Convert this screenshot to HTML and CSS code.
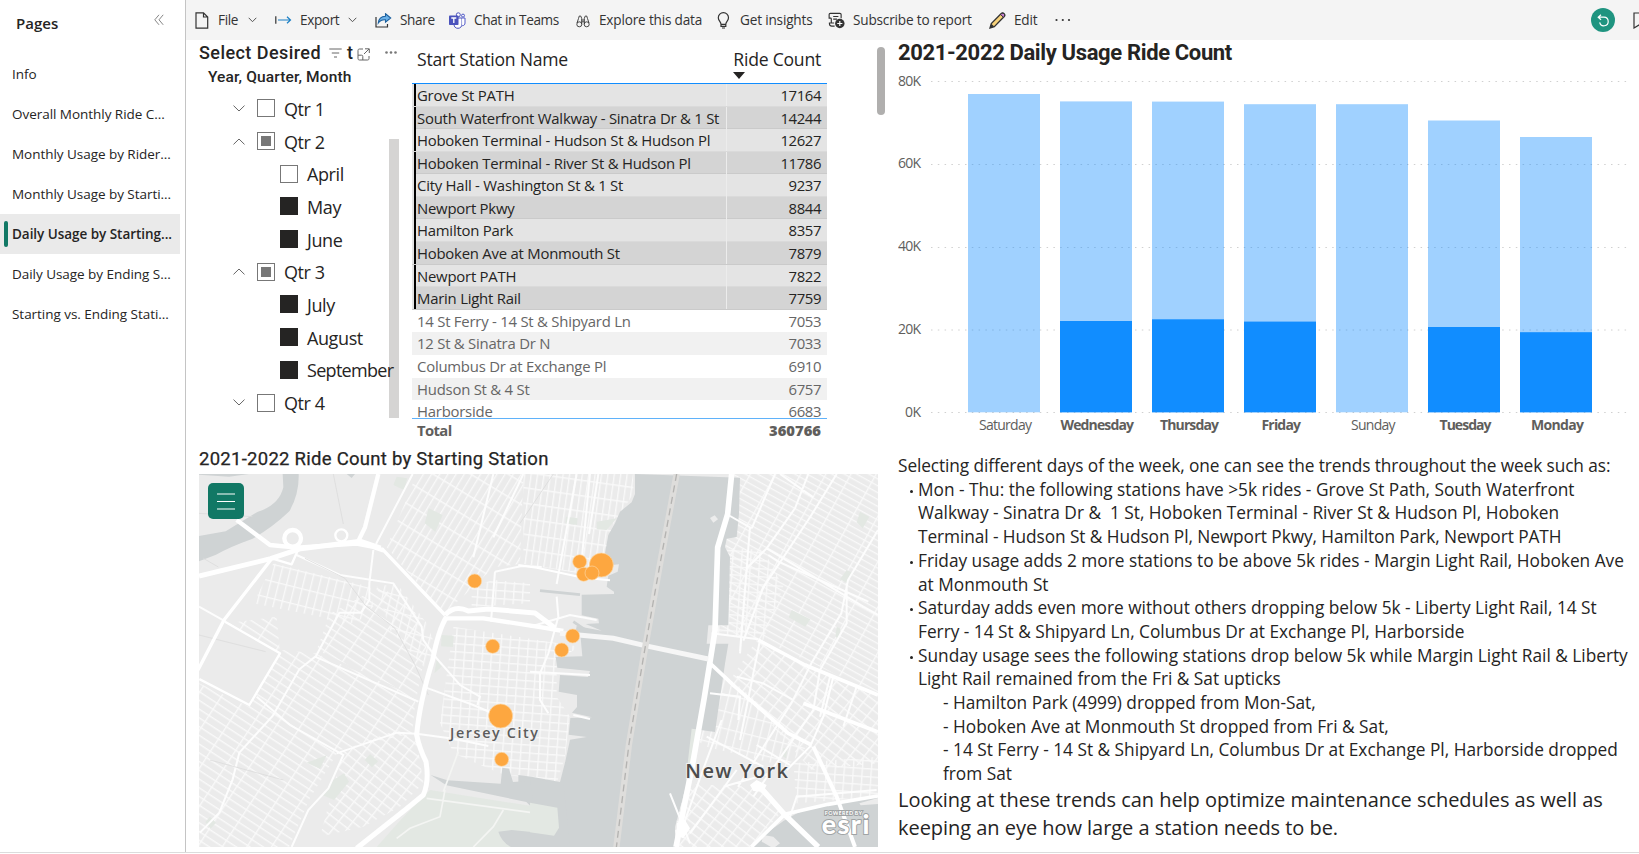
FILE: index.html
```html
<!DOCTYPE html>
<html lang="en">
<head>
<meta charset="utf-8">
<title>Daily Usage by Starting Station</title>
<link rel="stylesheet" href="styles.css">
</head>
<body>
<div class="app">
  <nav class="pages">
    <header class="pages-head">
      <h2>Pages</h2>
      <svg class="collapse" width="10" height="12" viewBox="0 0 10 12"><path d="M5 .8.8 5.800 5 10.800M9.200.8 5 5.800l4.200 5"/></svg>
    </header>
    <ul>
      <li><span>Info</span></li>
      <li><span>Overall Monthly Ride C...</span></li>
      <li><span>Monthly Usage by Rider...</span></li>
      <li><span>Monthly Usage by Starti...</span></li>
      <li class="active"><span>Daily Usage by Starting...</span></li>
      <li><span>Daily Usage by Ending S...</span></li>
      <li><span>Starting vs. Ending Stati...</span></li>
    </ul>
  </nav>
  <div class="main">
    <div class="toolbar">
      <div class="tools">
        <div class="tool file"><svg width="14" height="17" viewBox="0 0 14 17"><path class="ink" d="M1 .8h7.500L12.700 5v11.200H1zM8.500.8V5h4.200"/></svg><span>File</span><svg class="chev" width="9" height="6" viewBox="0 0 9 6"><path d="M.7.8l3.800 3.900L8.300.8"/></svg></div>
        <div class="tool export"><svg width="17" height="10" viewBox="0 0 17 10"><path class="ink" d="M.8 1.300v7.400"/><path class="blue" d="M3 5h12.500M12 1.700 15.500 5 12 8.300"/></svg><span>Export</span><svg class="chev" width="9" height="6" viewBox="0 0 9 6"><path d="M.7.8l3.800 3.900L8.300.8"/></svg></div>
        <div class="tool share"><svg width="17" height="15" viewBox="0 0 17 15"><path class="ink" d="M1 4v10h11.500v-3"/><path d="M10.500.8 15.700 5l-5.200 4.200V6.800C7.300 6.600 5 7.600 3.300 10 3.600 6 6 3.400 10.500 3.200z" fill="#6bb1e8" stroke="#1b5f9e" stroke-width="1.100"/></svg><span>Share</span></div>
        <div class="tool teams"><svg width="17" height="17" viewBox="0 0 17 17"><circle cx="14" cy="3.600" r="1.500" stroke="#5059c9"/><circle cx="9.300" cy="2.800" r="2" fill="#fff" stroke="#4b53bc"/><path d="M9 6h4v6c0 2.500-1.600 4.300-4 4.300S5 15 5 12z" fill="#fff" stroke="#4b53bc"/><path d="M13 6h3v5c0 1.600-1 2.700-2.800 2.700" fill="#fff" stroke="#5059c9"/><rect y="3.500" width="9.500" height="9.500" rx=".8" fill="#4b53bc"/><path d="M2.300 6h5M4.800 6v5" stroke="#fff" stroke-width="1.300"/></svg><span>Chat in Teams</span></div>
        <div class="tool"><svg class="bino" width="14" height="13" viewBox="0 0 14 13"><path class="thin" d="M2.500 3.500 3.300 1h1.400l1 2.300v6M11.500 3.500 10.700 1H9.300l-1 2.300v6M2.500 3.500 1 8M11.500 3.500 13 8M5.700 5h2.600M5.700 6.800h2.600"/><circle class="thin" cx="3.300" cy="9.300" r="2.500"/><circle class="thin" cx="10.700" cy="9.300" r="2.500"/></svg><span>Explore this data</span></div>
        <div class="tool"><svg class="bulb" width="13" height="17" viewBox="0 0 13 17"><path class="ink" d="M4 12.300C4 9.800 1.300 8.900 1.300 5.700a5.100 5.100 0 0 1 10.200 0c0 3.200-2.700 4.100-2.700 6.600zM4 12.300v2h4.800v-2M5 16h3"/></svg><span>Get insights</span></div>
        <div class="tool"><svg width="17" height="17" viewBox="0 0 18 17"><path class="ink" d="M7 14.500H4c-1.500 0-2.500-1-2.500-2.500v-.8h5M3.500 11V6M3.500 6H1.200V2.200c0-.7.4-1.200 1.200-1.200h10.200c.8 0 1.300.5 1.300 1.200V6M5.500 4.300h5.500M5.500 7h4"/><circle cx="12.500" cy="11.700" r="5" fill="#333"/><path d="M12.500 9v5.400M9.800 11.700h5.400" stroke="#fff" stroke-width="1.200"/></svg><span>Subscribe to report</span></div>
        <div class="tool"><svg width="17" height="17" viewBox="0 0 17 17"><path d="M1 16 2.300 11.500 12 1.800c1-1 2.200-1 3.100-.1s.9 2.100-.1 3.100L5.300 14.600z" fill="#f7d27a" stroke="#333" stroke-width="1.300"/><path d="m11.500 2.400 3 3 1-1.400c.8-1.400-1-3.400-2.600-2.700z" fill="#c77fd0" stroke="#333"/><path d="m1 16 1.300-4.300 2.900 2.900z" fill="#333"/></svg><span>Edit</span></div>
        <div class="tool"><svg class="dots" width="16" height="4" viewBox="0 0 16 4"><circle cx="1.500" cy="2" r="1.100"/><circle cx="7.800" cy="2" r="1.100"/><circle cx="14" cy="2" r="1.100"/></svg></div>
      </div>
      <div class="tools-right">
        <span class="reset"><svg width="13" height="13" viewBox="0 0 13 13"><path d="M4 .8 1.200 3.200 4 5.800M1.200 3.200H7a4.300 4.300 0 1 1-4.300 5.200"/></svg></span>
        <svg class="bookmark" width="12" height="17" viewBox="0 0 12 17"><path class="ink" d="M1 1h10v15l-5-3-5 3z"/></svg>
      </div>
    </div>
    <div class="report">
      <div class="left">
        <div class="top">
          <section class="slicer">
            <div class="slicer-title"><h3>Select Desired</h3>
              <svg class="filter" width="13" height="10" viewBox="0 0 13 10"><path d="M.3 1h12.400M2.800 5h7.400M5 9h3"/></svg><b>t</b>
              <svg class="focus" width="13" height="13" viewBox="0 0 13 13"><path d="M6 1H2.500C1.500 1 1 1.500 1 2.500v8c0 1 .5 1.500 1.500 1.500h8c1 0 1.500-.5 1.500-1.500V8M1 7.200h3.500c1 0 1.300.4 1.300 1.300V12M8 .8h4.300V5M12 1 7 6"/></svg>
              <svg class="more" width="12" height="3" viewBox="0 0 12 3"><circle cx="1.500" cy="1.500" r="1.300"/><circle cx="6" cy="1.500" r="1.300"/><circle cx="10.500" cy="1.500" r="1.300"/></svg>
            </div>
            <h4>Year, Quarter, Month</h4>
            <div class="tree">
              <ul>
                <li><svg class="tw" width="12" height="7" viewBox="0 0 12 7"><path d="M.5.6 6 6 11.500.6"/></svg><i class="box"></i><span>Qtr 1</span></li>
                <li><svg class="tw" width="12" height="7" viewBox="0 0 12 7"><path d="M.5 6.400 6 1l5.500 5.400"/></svg><i class="box part"></i><span>Qtr 2</span></li>
                <li class="sub"><i class="box"></i><span>April</span></li>
                <li class="sub"><i class="box full"></i><span>May</span></li>
                <li class="sub"><i class="box full"></i><span>June</span></li>
                <li><svg class="tw" width="12" height="7" viewBox="0 0 12 7"><path d="M.5 6.400 6 1l5.500 5.400"/></svg><i class="box part"></i><span>Qtr 3</span></li>
                <li class="sub"><i class="box full"></i><span>July</span></li>
                <li class="sub"><i class="box full"></i><span>August</span></li>
                <li class="sub"><i class="box full"></i><span>September</span></li>
                <li><svg class="tw" width="12" height="7" viewBox="0 0 12 7"><path d="M.5.6 6 6 11.500.6"/></svg><i class="box"></i><span>Qtr 4</span></li>
              </ul>
              <div class="tree-bar"></div>
            </div>
          </section>
          <section class="stations">
            <div class="th"><span>Start Station Name</span><span class="sorted">Ride Count</span></div>
            <div class="rows">
              <div class="row on"><span>Grove St PATH</span><span>17164</span></div>
              <div class="row on alt"><span>South Waterfront Walkway - Sinatra Dr &amp; 1 St</span><span>14244</span></div>
              <div class="row on"><span>Hoboken Terminal - Hudson St &amp; Hudson Pl</span><span>12627</span></div>
              <div class="row on alt"><span>Hoboken Terminal - River St &amp; Hudson Pl</span><span>11786</span></div>
              <div class="row on"><span>City Hall - Washington St &amp; 1 St</span><span>9237</span></div>
              <div class="row on alt"><span>Newport Pkwy</span><span>8844</span></div>
              <div class="row on"><span>Hamilton Park</span><span>8357</span></div>
              <div class="row on alt"><span>Hoboken Ave at Monmouth St</span><span>7879</span></div>
              <div class="row on"><span>Newport PATH</span><span>7822</span></div>
              <div class="row on alt"><span>Marin Light Rail</span><span>7759</span></div>
              <div class="row"><span>14 St Ferry - 14 St &amp; Shipyard Ln</span><span>7053</span></div>
              <div class="row alt"><span>12 St &amp; Sinatra Dr N</span><span>7033</span></div>
              <div class="row"><span>Columbus Dr at Exchange Pl</span><span>6910</span></div>
              <div class="row alt"><span>Hudson St &amp; 4 St</span><span>6757</span></div>
              <div class="row"><span>Harborside</span><span>6683</span></div>
            </div>
            <div class="total"><span>Total</span><b>360766</b></div>
          </section>
          <div class="table-bar"></div>
        </div>
        <section class="mapcard">
          <h3>2021-2022 Ride Count by Starting Station</h3>
          <div class="map">
            <svg width="679" height="373" viewBox="27 102 2037 1119" preserveAspectRatio="none">
              <defs>
                <pattern id="g1" width="19" height="46" patternUnits="userSpaceOnUse" patternTransform="rotate(8)"><path d="M0 0H19M0 0V46" class="st"/></pattern>
                <pattern id="g2" width="21" height="58" patternUnits="userSpaceOnUse" patternTransform="rotate(31)"><path d="M0 0H21M0 0V58" class="st"/></pattern>
                <pattern id="g3" width="27" height="24" patternUnits="userSpaceOnUse" patternTransform="rotate(4)"><path d="M0 0H27M0 0V24" class="st"/></pattern>
                <pattern id="g4" width="62" height="22" patternUnits="userSpaceOnUse" patternTransform="rotate(33)"><path d="M0 0H62M0 0V22" class="st"/></pattern>
                <pattern id="g5" width="66" height="18" patternUnits="userSpaceOnUse" patternTransform="rotate(29)"><path d="M0 0H66M0 0V18" class="st"/></pattern>
                <pattern id="g6" width="34" height="25" patternUnits="userSpaceOnUse" patternTransform="rotate(38)"><path d="M0 0H34M0 0V25" class="st"/></pattern>
                <pattern id="g7" width="24" height="50" patternUnits="userSpaceOnUse" patternTransform="rotate(14)"><path d="M0 0H24M0 0V50" class="st"/></pattern>
              </defs>
              <rect x="27" y="102" width="2037" height="1119" fill="#ebebeb"/>
              <!-- street grids by neighbourhood -->
              <path fill="url(#g1)" d="M1000 102h330v60l-60 90-25 90-5 70-240-40z"/>
              <path fill="url(#g2)" d="M680 102h320l-10 270-80 10-60 60-90 80-170-200z"/>
              <path fill="url(#g3)" d="M790 560l380 60-70 40v110l40 60-15 120-25 80-170-30-140-60-40-90z"/>
              <path fill="url(#g3)" d="M845 440l65-20 110 10v60l-175 10z"/>
              <path fill="url(#g4)" d="M27 730l150 70 100-170 100 10 300 130-10 110-220 50-90 150-60 141H27z"/>
              <path fill="url(#g7)" d="M250 370l290 70 10 60-50 50-60 0-50-20-200-40z"/>
              <path fill="url(#g4)" d="M110 550l150-20 10 110zM420 520l150-80 100 60 40 120-30 150-300-140z"/>
              <path fill="url(#g7)" d="M560 440l60-10 90 120 30 80-30 60-110-120z"/>
              <path fill="url(#g6)" d="M460 930l160-60 60 30 20 130-70 70-110 60-130 30z"/>
              <path fill="url(#g5)" d="M1625 102h439v660l-320-150-160-40 10-300z"/>
              <path fill="url(#g3)" d="M1580 320l140 10 60 110-60 160-145-20z"/>
              <path fill="url(#g6)" d="M1700 600l364 170v200l-200 20-150-170-100-90z"/>
              <path fill="url(#g7)" d="M1560 680l90 60 200 180-60 60-240-60-30-20z"/>
              <path fill="url(#g6)" d="M1430 1030l270 10 80 70-100 111h-260z"/>
              <path fill="url(#g3)" d="M1810 970l254-20v120l-244 20z"/>
              <!-- parks -->
              <g fill="#e3e8e3">
                <path d="M620 110l32 5-10 35-32-15zM716 205l42 20-22 50-32-25zM755 585l36 2-2 34-36-2zM430 1020l32-20 15 25-45 55-35-15zM350 968l60-22-20 40zM540 942l24 22-18 18-22-22zM740 660l15 20-22 20zM1128 230l35 5-2 20-35-5zM1220 245l60-10-30 35-30-2zM1805 510l56 28-15 22-50-28zM2010 215l28 15-20 35-18-18zM1970 390l20 10-20 28-20-10zM1455 860l70 10-20 130-30 60-40-60zM60 1130l18 18-16 18-16-20zM1940 560l12 6-6 30-10-6zM1780 925l12 0-4 30-10-6z"/>
                <path d="M720 1050l380 60 20 85-30 26H560l75-85z"/>
              </g>
              <!-- water -->
              <g fill="#cfd3d4">
                <path d="M278 102h48q2 60-28 112-50 48-110 82-70 25-110 48L27 364v-76l80-14 95-58q65-20 78-74zM27 102h150l-60 8-90-6zM470 102h25l-10 12z"/>
                <path d="M1335 102l0 60-10 25-35 28-15 35-20 35-10 55 20 35 22-2-4 22-28 12-5 33 22 15v7l-97 2v62l50 10 2 14-40 2 48 20-75-14-3 16 15 20 5 55-80 2 5 32 98 10-6 18-84-6-4 50 55 10v36l-15 17 60 14-65 2-5 50 54 7-50 8-14 65-16 62-85-16-40-5v50l60 55 20 60 0 61h390v-70l35-130v-35l15-130 70 10 30-205 10-60-65 0 5-55h60l5-205-15-30 5-25 30-5 7-70 3-108z"/>
                <path d="M722 1005l50 16 160 10 5-48 20 3 12 40 40-3v-10l60 10v75l-40-6-8 6-12-12-240-50z"/>
                <path d="M925 1175l40-5 120 12v40H965q-30-15-40-47zM1690 1221q70-80 170-118l204-35v153z"/>
                <path d="M1020 1015l100 18 20 180-50 8H1040v-36l60-6-10-66-60-15z"/>
              </g>
              <path d="M1020 1088l82 15 5 60-15 24-72-10z" fill="#e3e8e3"/>
              <path d="M1560 234l14-8 10 12-14 10z" fill="#ececec"/>
              <path d="M1050 452l120 12M1150 545l35 24" stroke="#cfd3d4" stroke-width="8"/>
              <path d="M1720 1185l30 5 20 20-20 15-35-20zM2008 1090l56-16v18l-52 4z" fill="#ececec"/>
              <!-- secondary streets -->
              <g class="sec">
                <path d="M320 345l130 60 160 25 85 130 5 40 40 55 70 80 60 35-8 25M550 330l-12 100v50l-25 38h-65l-70 130-50 40-80 140-100 110-20 80-40 100-58 60M375 650l310 135M200 770l100 85 160 90-45 100-60 65-50 111M440 940l180-62 60 3 110 15 105 22M700 740l150 55 70 30M915 395l80-17 60 3M915 395l-12 150M668 102l-110 210M910 102l-60 250M1000 102l-90 190M27 500l80 45"/>
                <path d="M1100 470l5 60-30 110-25 60v80l25 40M1020 695l180 10M1150 825l50 12M1020 560l120-35 80 15M1200 102l-30 310M1225 102l-28 180M1160 102l-60 330"/>
                <path d="M1615 225l70 40M1685 265l70-163M1680 260l-30 380M1730 325l-60 60-20 250M1730 325l85-120 40-103M1730 325l290 175 44 25M1735 345l30 20 270 120M1940 102l-80 130-140 210-60 160M2064 270l-90 150-20 100-90 150-60 120-160 250M1565 580l140 18M1920 710l-30 120M2000 740l-40 120M1640 710l80 20 90 50M1560 760l90 10-5 70M1550 890l170 90M1970 430l0 120-80 140-20 120-180 260M1700 915l100 60M1710 600l-60 300M1475 1170l60-170 60-160M1500 1180l140-190M1600 1040l140-40M1800 1130l20-60 240-20M1440 1060l60 150M1770 102l100 70"/>
              </g>
              <g class="pk"><path d="M710 1075l310 42M765 1050l-15 80-90 35-40 30M940 1110l-30 50-60 61M805 935l-45 120"/></g>
              <g class="rail"><path d="M27 585l200 50M345 355l120 60 60 80 90 70 60 110 40 90M430 102l30 150M60 960l220 60M990 250l100-148M27 220l160 10M40 355l45 26"/></g>
              <!-- arterials -->
              <g stroke="#fff" stroke-linejoin="round">
                <path d="M27 408l215-52 90-30 180-22 60 20" stroke-width="15"/>
                <path d="M140 240l100 75 80 8 180-12 50 10 30 10" stroke-width="13"/>
                <path d="M565 102l-40 160-22 45" stroke-width="13"/>
                <path d="M242 360l-140 180-78 150M575 325l190 200" stroke-width="10"/>
                <path d="M105 545l165 95-92 155-150-78" stroke-width="7"/>
                <circle cx="308" cy="295" r="25" stroke-width="13"/><circle cx="454" cy="286" r="18" stroke-width="7"/>
                <path d="M245 355l60 18 20-45" stroke-width="7"/>
                <path d="M770 530q-25 40-42 130-40 130-48 225 8 40 28 80 10 60-8 100l-55 45-145 115" stroke-width="15"/>
                <path d="M765 525q30-32 70-12l60-6 140 12 60 45" stroke-width="15"/>
                <path d="M770 535l110 0 180 28 60 10" stroke-width="13"/>
                <path d="M985 375l55 8 140 30 80 8" stroke-width="6"/>
                <path d="M1625 102l-12 120-30 100-8 250-32 200-35 200-50 249" stroke-width="17"/>
                <path d="M1705 600l140 75 219 90M1840 790l224 86M1555 665l80 75 160 140 70 35M2064 1068l-150 25-130 30-100 98" stroke-width="11"/>
                <path d="M1705 1035l80 90 100 96" stroke-width="16"/>
                <path d="M1870 920l70 150 55 151" stroke-width="12"/>
                <path d="M1860 920l-70 70M1930 710l-30 120-40 90" stroke-width="6"/>
              </g>
              <path d="M1680 1035l20-15 30 15-10 20-30-2zM1460 1150l25-10 15 25-20 30-20-8z" fill="#fff"/>
              <path d="M1110 580l160 15 95 22 190 40" stroke="#f6f6f6" stroke-width="15"/>
              <!-- state line -->
              <path d="M1460 102l-50 270-48 270-45 270-38 311" stroke="#dedddb" stroke-width="19"/>
              <path d="M1460 102l-50 270-48 270-45 270-38 311" stroke="#b4b3b1" stroke-width="4" stroke-dasharray="21 14"/>
              <g class="pins">
                <circle cx="854" cy="423" r="21"/><circle cx="908" cy="619" r="21"/><circle cx="932" cy="828" r="36"/><circle cx="935" cy="958" r="21"/>
                <circle cx="1169" cy="365" r="21"/><circle cx="1181" cy="403" r="21"/><circle cx="1234" cy="375" r="36"/><circle cx="1206" cy="399" r="21"/>
                <circle cx="1148" cy="588" r="21"/><circle cx="1115" cy="630" r="21"/>
              </g>
              <g class="places">
                <text x="780" y="894" font-size="43" textLength="264">Jersey City</text>
                <text x="1486" y="1014" font-size="60" textLength="308" class="ny">New York</text>
              </g>
              <g class="esri">
                <text x="1904" y="1125" font-size="16.500" textLength="112">POWERED BY</text>
                <text x="1895" y="1181" font-size="80" textLength="143" class="logo">esri</text>
              </g>
            </svg>
            <button class="menu" aria-label="Map menu"><svg width="18" height="18" viewBox="0 0 18 18"><path d="M0 2h18M0 9.500h18M0 17h18"/></svg></button>
          </div>
        </section>
      </div>
      <div class="right">
        <h2 class="chart-title">2021-2022 Daily Usage Ride Count</h2>
        <svg class="chart" width="741" height="370" viewBox="898 66 741 370">
          <g class="grid"><path d="M931 81.500h700M931 164.500h700M931 247.500h700M931 330h700M931 412.500h700"/></g>
          <g class="axis">
            <text x="898" y="86" textLength="23">80K</text><text x="898" y="168" textLength="23">60K</text><text x="898" y="251" textLength="23">40K</text><text x="898" y="334" textLength="23">20K</text><text x="905" y="417" textLength="16">0K</text>
          </g>
          <g class="all">
            <rect x="968" y="94" width="72" height="318.300"/><rect x="1060" y="101.400" width="72" height="310.900"/><rect x="1152" y="101.600" width="72" height="310.700"/><rect x="1244" y="104.200" width="72" height="308.100"/><rect x="1336" y="104.200" width="72" height="308.100"/><rect x="1428" y="120.500" width="72" height="291.800"/><rect x="1520" y="137" width="72" height="275.300"/>
          </g>
          <g class="sel">
            <rect x="1060" y="321" width="72" height="91.300"/><rect x="1152" y="319.300" width="72" height="93"/><rect x="1244" y="321.600" width="72" height="90.700"/><rect x="1428" y="327" width="72" height="85.300"/><rect x="1520" y="332.200" width="72" height="80.100"/>
          </g>
          <g class="days">
            <text x="979" y="430" textLength="53">Saturday</text><text x="1060.500" y="430" textLength="73.500" class="b">Wednesday</text><text x="1160" y="430" textLength="59" class="b">Thursday</text><text x="1261.500" y="430" textLength="39.500" class="b">Friday</text><text x="1351" y="430" textLength="44.500">Sunday</text><text x="1439.500" y="430" textLength="52" class="b">Tuesday</text><text x="1531" y="430" textLength="53" class="b">Monday</text>
          </g>
        </svg>
        <article class="notes">
          <p>Selecting different days of the week, one can see the trends throughout the week such as:</p>
          <ul>
            <li>Mon - Thu: the following stations have &gt;5k rides - Grove St Path, South Waterfront<br>Walkway - Sinatra Dr &amp;&nbsp; 1 St, Hoboken Terminal - River St &amp; Hudson Pl, Hoboken<br><span class="tight">Terminal - Hudson St &amp; Hudson Pl, Newport Pkwy, Hamilton Park, Newport PATH</span></li>
            <li>Friday usage adds 2 more stations to be above 5k rides - Margin Light Rail, Hoboken Ave<br>at Monmouth St</li>
            <li>Saturday adds even more without others dropping below 5k - Liberty Light Rail, 14 St<br>Ferry - 14 St &amp; Shipyard Ln, Columbus Dr at Exchange Pl, Harborside</li>
            <li>Sunday usage sees the following stations drop below 5k while Margin Light Rail &amp; Liberty<br>Light Rail remained from the Fri &amp; Sat upticks
              <div class="inner">- Hamilton Park (4999) dropped from Mon-Sat,<br>- Hoboken Ave at Monmouth St dropped from Fri &amp; Sat,<br>- 14 St Ferry - 14 St &amp; Shipyard Ln, Columbus Dr at Exchange Pl, Harborside dropped<br>from Sat</div></li>
          </ul>
          <p class="big">Looking at these trends can help optimize maintenance schedules as well as<br>keeping an eye how large a station needs to be.</p>
        </article>
      </div>
    </div>
  </div>
</div>
</body>
</html>
```
FILE: styles.css
```css
* { box-sizing: border-box; margin: 0; padding: 0; }
body { font-family: "Open Sans", "Noto Sans", sans-serif; color: #252423; background: #fff; overflow: hidden; }
ul { list-style: none; }
svg { display: block; flex: none; fill: none; }
.app { display: flex; height: 853px; border-bottom: 1px solid #dcdcdc; white-space: nowrap; }

/* page list */
.pages { flex: none; width: 186px; border-right: 1px solid #c4c4c4; }
.pages-head { display: flex; justify-content: space-between; height: 54px; padding: 14px 21px 0 16px; }
.pages-head h2 { font-size: 15px; font-weight: 600; line-height: 18px; }
.collapse { stroke: #777; stroke-width: .9; margin-left: 1px; }
.pages li { display: flex; align-items: center; width: 180px; height: 40px; padding-left: 12px; font-size: 13.500px; letter-spacing: -.04px; }
.pages li.active { background: #eaeaea; font-weight: 600; padding-left: 4px; }
.pages li.active::before { content: ""; width: 4px; height: 26px; margin-right: 4px; border-radius: 2px; background: #117865; }

/* toolbar */
.main { flex: 1; min-width: 0; }
.toolbar { display: flex; justify-content: space-between; height: 40px; background: #f4f4f4; overflow: hidden; }
.tools { display: grid; grid-template-columns: 80px 100px 74px 126px 141px 112px 161px 66px 20px; padding-left: 9px; }
.tool { display: flex; align-items: center; gap: 8px; font-size: 13.600px; letter-spacing: -.18px; color: #333; }
.tool span { margin-top: -1px; }
.tool.file { gap: 9px; }
.tool.file, .tool.export, .tool.share, .tool.teams { letter-spacing: -.38px; }
.ink { stroke: #333; stroke-width: 1.200; }
.blue { stroke: #1a7fc4; stroke-width: 1.200; }
.thin { stroke: #333; stroke-width: .9; }
.dots { fill: #333; }
.bino { margin: 3px 1px 0 1px; }
.bulb { margin: 0 2px 0 1px; }
.chev { stroke: #555; stroke-width: 1; margin-left: 1px; }
.tools-right { display: flex; align-items: center; gap: 18px; width: 48px; flex: none; }
.reset { display: flex; align-items: center; justify-content: center; flex: none; width: 24px; height: 24px; border-radius: 50%; background: #1f9480; }
.reset svg { stroke: #fff; stroke-width: 1.200; }

/* report */
.report { display: grid; grid-template-columns: 712px 741px; height: 812px; overflow: hidden; }
.top { display: flex; height: 404px; }
h3, h4, .chart-title, .slicer b { font-family: Roboto, sans-serif; font-weight: 500; }
.slicer { width: 226px; padding-left: 13px; }
.slicer-title { display: flex; align-items: center; height: 24px; }
.slicer-title h3, .slicer b { font-size: 18px; letter-spacing: .44px; }
.filter { margin: 2px 5px 0 8px; stroke: #666; }
.focus { margin: 4px 15px 0 4px; stroke: #666; }
.more { fill: #777; margin-top: 1px; }
.slicer h4 { padding-left: 9px; font-size: 15.500px; line-height: 22px; letter-spacing: .13px; padding-top: 2px; height: 24px; }
.tree { display: flex; justify-content: space-between; padding: 4px 13px 0 34px; }
.tree li { display: flex; align-items: center; height: 32.700px; font-size: 18px; letter-spacing: -.7px; }
.tree li:not(.sub), .tree li:nth-child(-n+8) { letter-spacing: -.4px; }
.tree li span { padding-top: 1px; margin-right: -30px; }
.tw { margin-right: 12px; stroke: #666; }
.tree .sub { padding-left: 47px; }
.box { flex: none; width: 18px; height: 18px; margin-right: 9px; border: 1.500px solid #777; }
.box.part { background: #777; background-clip: content-box; padding: 3px; }
.box.full { background: #252423; border-color: #252423; }
.tree-bar { width: 10px; height: 279px; margin-top: 47px; background: #d5d4d3; position: relative; z-index: -1; }

.stations { width: 415px; }
.th { display: flex; justify-content: space-between; height: 44px; padding: 7px 6px 0 5px; border-bottom: 1px solid #118dff; font-size: 17.600px; line-height: 24px; letter-spacing: -.24px; }
.sorted::after { content: ""; display: block; width: 0; margin-top: 1px; border: 6px solid transparent; border-top: 7px solid #252423; border-bottom: 0; }
.rows { height: 334px; overflow: hidden; }
.row { display: grid; grid-template-columns: 314.500px 100.500px; height: 22.580px; line-height: 22.200px; font-size: 14.900px; letter-spacing: -.23px; color: #666; }
.row span { padding-left: 5px; }
.row span:last-child { padding-right: 6px; text-align: right; letter-spacing: -.42px; }
.row.alt { background: #f1f1f1; }
.row.on { background: #e4e4e4; color: #252423; border-bottom: 1px solid #dadada; }
.row.on.alt { background: #d4d4d4; border-bottom-color: #cacaca; }
.row.on span:first-child { border-right: 1px solid #ececec; box-shadow: inset 2px 0 #e4e4e4, inset 4px 0 #000; }
.total { display: flex; justify-content: space-between; padding: 0 6px 0 5px; border-top: 1px solid #5fb2fa; font-size: 14.800px; line-height: 22px; font-weight: 700; color: #605e5c; }
.total span { letter-spacing: -.6px; }
.table-bar { width: 8px; height: 68px; margin: 7px 0 0 50px; border-radius: 4px; background: #b0afae; }

/* map */
.mapcard { padding-left: 13px; }
.mapcard h3 { height: 30px; padding-top: 1px; font-size: 18.500px; line-height: 29px; font-weight: 400; letter-spacing: .27px; -webkit-text-stroke: .25px #252423; }
.map { position: relative; width: 679px; height: 373px; }
.menu { position: absolute; left: 9px; top: 9px; display: flex; align-items: center; justify-content: center; width: 36px; height: 36px; border: 0; border-radius: 5px; background: #117865; }
.menu svg { stroke: #fff; stroke-width: 1.200; }
.st { stroke: #f9f9f9; stroke-width: 8; }
.sec { stroke: #fdfdfd; stroke-width: 6; }
.pk { stroke: #f4f5f3; stroke-width: 5; }
.rail { stroke: #dcdcdc; stroke-width: 2.500; }
.pins { fill: #fda740; stroke: #fdd8a5; stroke-width: 2; }
.places { font-family: "Open Sans", sans-serif; fill: #5c5c5c; font-weight: 600; stroke: #f2f2f2; stroke-width: 6; paint-order: stroke; }
.places .ny { fill: #4c4c4c; }
.esri { font-family: Lato, sans-serif; font-weight: 700; fill: #fff; stroke: #a0a4a5; stroke-width: 6; paint-order: stroke; }
.esri .logo { font-weight: 900; }

/* chart */
.chart-title { height: 26px; font-size: 22px; font-weight: 700; line-height: 26px; letter-spacing: -.36px; }
.grid { stroke: #d0d0d0; stroke-dasharray: 1.500 5.300; }
.axis, .days { font-size: 14px; fill: #605e5c; }
.days .b { font-weight: 700; }
.all { fill: #118dff; fill-opacity: .4; }
.sel { fill: #118dff; }

/* notes */
.notes { padding-top: 18px; font-size: 17.300px; line-height: 23.700px; letter-spacing: -.1px; }
.notes li { position: relative; padding-left: 20px; letter-spacing: -.01px; }
.notes .tight { letter-spacing: -.08px; }
.notes li::before { content: ""; position: absolute; left: 12px; top: 12px; width: 3px; height: 3px; border-radius: 50%; background: #252423; }
.inner { padding-left: 25px; }
.notes .big { font-size: 20px; line-height: 27.700px; letter-spacing: -.04px; }
```
